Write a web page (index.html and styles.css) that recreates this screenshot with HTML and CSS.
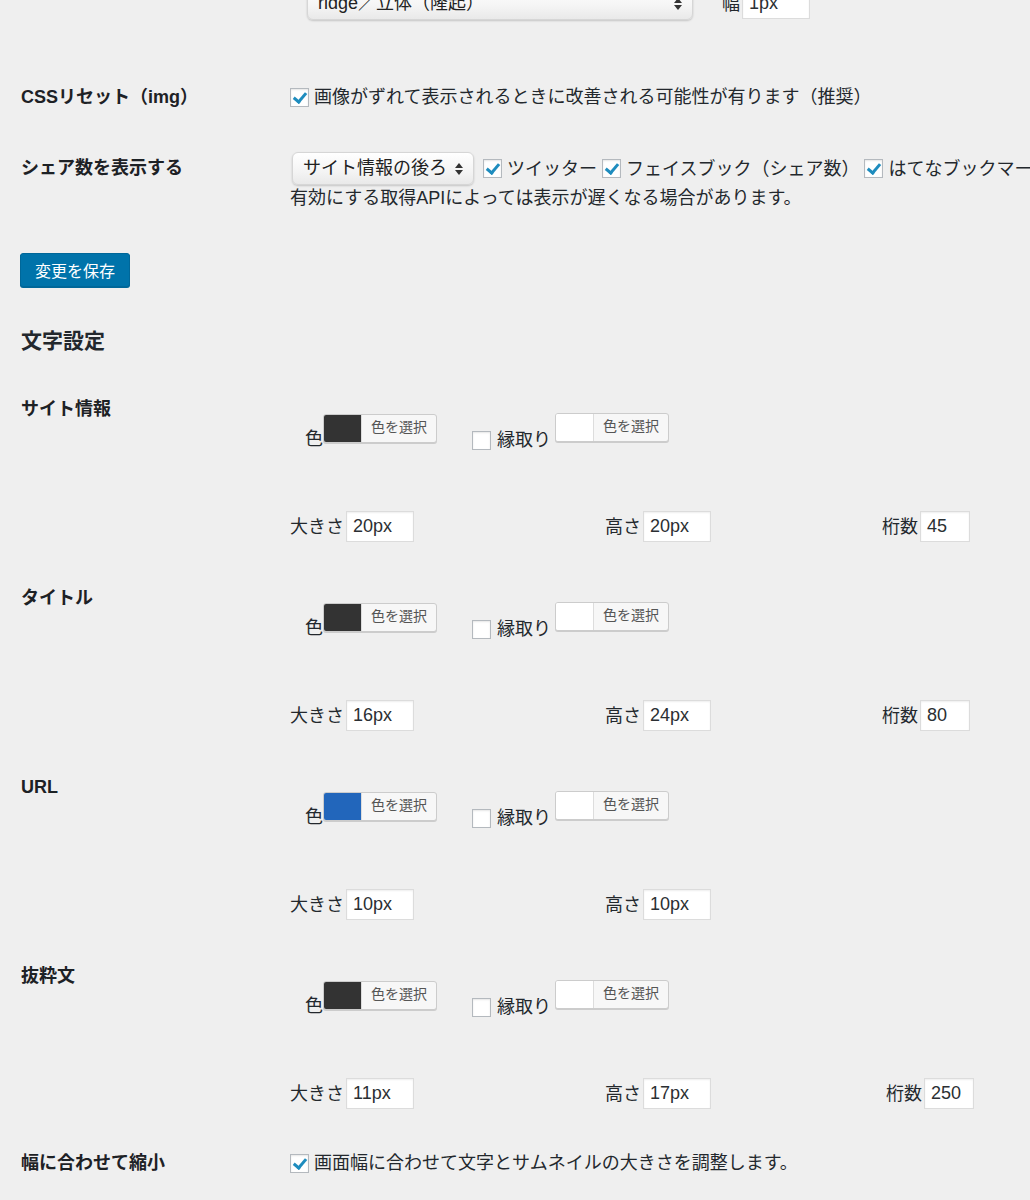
FILE: index.html
```html
<!DOCTYPE html>
<html lang="ja">
<head>
    <meta charset="UTF-8">
    <meta name="viewport" content="width=device-width, initial-scale=1.0">
    <title>表示設定</title>
    <link rel="stylesheet" href="styles.css">
</head>
<body>
    <div class="wrap">
        <div class="form-row top-row">
            <div class="row-label"></div>
            <div class="field field-inline">
                <div class="select select-wide">ridge／立体（隆起）<span class="arrows"></span></div>
                <span class="inline-label width-label">幅</span>
                <div class="text-input input-small">1px</div>
            </div>
        </div>

        <div class="form-row reset-row">
            <div class="row-label">CSSリセット（img）</div>
            <div class="field field-inline">
                <span class="checkbox checked"></span>
                <span class="check-text">画像がずれて表示されるときに改善される可能性が有ります（推奨）</span>
            </div>
        </div>

        <div class="form-row share-row">
            <div class="row-label">シェア数を表示する</div>
            <div class="field">
                <div class="field-inline share-line">
                    <div class="select select-share">サイト情報の後ろ<span class="arrows"></span></div>
                    <span class="checkbox checked"></span>
                    <span class="check-text">ツイッター</span>
                    <span class="checkbox checked"></span>
                    <span class="check-text">フェイスブック（シェア数）</span>
                    <span class="checkbox checked"></span>
                    <span class="check-text">はてなブックマーク</span>
                </div>
                <p class="note">有効にする取得APIによっては表示が遅くなる場合があります。</p>
            </div>
        </div>

        <button type="button" class="button-primary">変更を保存</button>

        <h2 class="section-title">文字設定</h2>

        <div class="form-row text-section">
            <div class="row-label">サイト情報</div>
            <div class="field">
                <div class="color-line">
                    <span class="color-label">色</span>
                    <span class="color-button"><span class="swatch swatch-dark"></span><span class="color-text">色を選択</span></span>
                    <span class="checkbox outline-check"></span>
                    <span class="outline-label">縁取り</span>
                    <span class="color-button color-button-outline"><span class="swatch"></span><span class="color-text">色を選択</span></span>
                </div>
                <div class="size-line">
                    <div class="size-group"><span>大きさ</span><span class="text-input input-size">20px</span></div>
                    <div class="size-group"><span>高さ</span><span class="text-input input-size">20px</span></div>
                    <div class="size-group"><span>桁数</span><span class="text-input input-count">45</span></div>
                </div>
            </div>
        </div>

        <div class="form-row text-section">
            <div class="row-label">タイトル</div>
            <div class="field">
                <div class="color-line">
                    <span class="color-label">色</span>
                    <span class="color-button"><span class="swatch swatch-dark"></span><span class="color-text">色を選択</span></span>
                    <span class="checkbox outline-check"></span>
                    <span class="outline-label">縁取り</span>
                    <span class="color-button color-button-outline"><span class="swatch"></span><span class="color-text">色を選択</span></span>
                </div>
                <div class="size-line">
                    <div class="size-group"><span>大きさ</span><span class="text-input input-size">16px</span></div>
                    <div class="size-group"><span>高さ</span><span class="text-input input-size">24px</span></div>
                    <div class="size-group"><span>桁数</span><span class="text-input input-count">80</span></div>
                </div>
            </div>
        </div>

        <div class="form-row text-section">
            <div class="row-label">URL</div>
            <div class="field">
                <div class="color-line">
                    <span class="color-label">色</span>
                    <span class="color-button"><span class="swatch swatch-blue"></span><span class="color-text">色を選択</span></span>
                    <span class="checkbox outline-check"></span>
                    <span class="outline-label">縁取り</span>
                    <span class="color-button color-button-outline"><span class="swatch"></span><span class="color-text">色を選択</span></span>
                </div>
                <div class="size-line">
                    <div class="size-group"><span>大きさ</span><span class="text-input input-size">10px</span></div>
                    <div class="size-group"><span>高さ</span><span class="text-input input-size">10px</span></div>
                </div>
            </div>
        </div>

        <div class="form-row text-section">
            <div class="row-label">抜粋文</div>
            <div class="field">
                <div class="color-line">
                    <span class="color-label">色</span>
                    <span class="color-button"><span class="swatch swatch-dark"></span><span class="color-text">色を選択</span></span>
                    <span class="checkbox outline-check"></span>
                    <span class="outline-label">縁取り</span>
                    <span class="color-button color-button-outline"><span class="swatch"></span><span class="color-text">色を選択</span></span>
                </div>
                <div class="size-line">
                    <div class="size-group"><span>大きさ</span><span class="text-input input-size">11px</span></div>
                    <div class="size-group"><span>高さ</span><span class="text-input input-size">17px</span></div>
                    <div class="size-group size-group-wide"><span>桁数</span><span class="text-input input-count">250</span></div>
                </div>
            </div>
        </div>

        <div class="form-row shrink-row">
            <div class="row-label">幅に合わせて縮小</div>
            <div class="field field-inline">
                <span class="checkbox checked"></span>
                <span class="check-text">画面幅に合わせて文字とサムネイルの大きさを調整します。</span>
            </div>
        </div>
    </div>
</body>
</html>
```

FILE: styles.css
```css
body {
    margin: 0;
    background-color: #efefef;
    color: #23282d;
    font-family: 'Liberation Sans', 'Noto Sans CJK JP', sans-serif;
    font-size: 18px;
    line-height: 24px;
    overflow: hidden;
}

.wrap {
    padding-left: 20px;
    width: 1200px;
    white-space: nowrap;
}

.form-row {
    display: grid;
    grid-template-columns: 270px 1fr;
    align-items: start;
}

.row-label {
    padding-left: 1px;
    font-weight: bold;
    color: #1d2125;
}

.field-inline {
    display: flex;
    align-items: center;
}

/* top (cut off) row */
.top-row {
    margin-top: -13px;
}

.select {
    position: relative;
    box-sizing: border-box;
    height: 33px;
    line-height: 31px;
    padding-left: 10px;
    border: 1px solid #d6d6d6;
    border-radius: 6px;
    background: linear-gradient(#ffffff, #f4f4f4 60%, #e9e9e9);
    box-shadow: 0 1px 2px rgba(0, 0, 0, 0.18);
    color: #222;
}

.select .arrows {
    position: absolute;
    right: 10px;
    top: 10px;
    width: 0;
    height: 0;
    border-left: 4px solid transparent;
    border-right: 4px solid transparent;
    border-bottom: 5px solid #333;
}

.select .arrows::after {
    content: "";
    position: absolute;
    left: -4px;
    top: 7px;
    border-left: 4px solid transparent;
    border-right: 4px solid transparent;
    border-top: 5px solid #333;
}

.select-wide {
    width: 386px;
    margin-left: 17px;
}

.width-label {
    margin-left: 29px;
    margin-right: 2px;
}

.text-input {
    display: inline-block;
    box-sizing: border-box;
    height: 31px;
    line-height: 29px;
    padding-left: 6px;
    background-color: #fff;
    border: 1px solid #dcdcdc;
    box-shadow: inset 0 1px 2px rgba(0, 0, 0, 0.07);
    color: #2b2f33;
}

.input-small {
    width: 68px;
}

/* checkboxes */
.checkbox {
    position: relative;
    display: inline-block;
    box-sizing: border-box;
    width: 19px;
    height: 19px;
    flex-shrink: 0;
    background-color: #fff;
    border: 1px solid #b4b9be;
    box-shadow: inset 0 1px 2px rgba(0, 0, 0, 0.1);
}

.checkbox.checked::after {
    content: "";
    position: absolute;
    left: 5px;
    top: 1px;
    width: 5px;
    height: 10px;
    border-right: 3px solid #1e8cbe;
    border-bottom: 3px solid #1e8cbe;
    transform: rotate(40deg);
}

.check-text {
    margin-left: 5px;
}

.reset-row {
    margin-top: 65px;
}

.reset-row .checkbox {
    margin-top: 1px;
}

/* share row */
.share-row {
    margin-top: 43px;
}

.share-row .row-label {
    padding-top: 4px;
}

.share-line {
    height: 33px;
}

.select-share {
    width: 182px;
    margin-left: 2px;
    margin-right: 9px;
}

.share-line .check-text {
    margin-right: 5px;
}

.note {
    margin: 1px 0 0;
}

.button-primary {
    display: block;
    margin-top: 43px;
    width: 110px;
    height: 34px;
    padding: 0;
    background-color: #0073aa;
    border: 1px solid #006799;
    border-radius: 3px;
    box-shadow: 0 1px 0 #006799;
    color: #fff;
    font-family: 'Liberation Sans', 'Noto Sans CJK JP', sans-serif;
    font-size: 16px;
}

.section-title {
    margin: 40px 0 0 1px;
    font-size: 21px;
    line-height: 28px;
}

/* text settings sections */
.text-section {
    margin-top: 42px;
}

.text-section + .text-section {
    margin-top: 44px;
}

.color-line {
    display: flex;
    align-items: flex-start;
    height: 37px;
    margin-top: 16px;
}

.color-label {
    margin-left: 15px;
    margin-top: 14px;
}

.color-button {
    display: flex;
    box-sizing: border-box;
    width: 114px;
    height: 29px;
    margin-top: 1px;
    background-color: #f7f7f7;
    border: 1px solid #cccccc;
    border-radius: 3px;
    box-shadow: 0 1px 0 #cccccc;
    overflow: hidden;
}

.swatch {
    width: 37px;
    height: 100%;
    background-color: #fff;
    border-right: 1px solid #ddd;
}

.swatch-dark {
    background-color: #333333;
}

.swatch-blue {
    background-color: #2266bb;
}

.color-text {
    flex: 1;
    text-align: center;
    font-size: 14px;
    line-height: 25px;
    color: #555;
}

.outline-check {
    margin-left: 35px;
    margin-top: 18px;
}

.outline-label {
    margin-left: 6px;
    margin-top: 15px;
}

.color-button-outline {
    margin-left: 4px;
    margin-top: 0;
}

.size-line {
    display: grid;
    grid-template-columns: 315px 277px auto;
    margin-top: 61px;
}

.size-group {
    display: flex;
    align-items: center;
}

.size-group .text-input {
    margin-left: 2px;
}

.input-size {
    width: 68px;
}

.input-count {
    width: 50px;
}

.size-group-wide {
    margin-left: 4px;
}

.shrink-row {
    margin-top: 42px;
}
```
